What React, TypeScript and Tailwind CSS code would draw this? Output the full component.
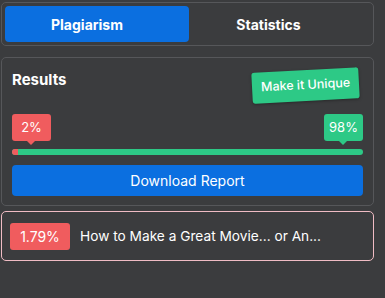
export default function App() {
  return (
    <div className="h-[298px] w-[385px] bg-[#3b3c3e] pt-[2px] pl-[1px] pr-[11px] font-['Inter',sans-serif] text-white">
      {/* tabs */}
      <div className="flex h-[44px] rounded-[5px] border border-[#56575a] p-[3px]">
        <button className="w-[184px] rounded-[4px] bg-[#0b6fe0] pr-[20px] text-[14px] font-bold">Plagiarism</button>
        <button className="flex-1 pr-[22px] text-[14px] font-bold">Statistics</button>
      </div>

      {/* results card */}
      <div className="mt-[11px] h-[149px] rounded-[5px] border border-[#56575a] px-[10px] pt-[10px]">
        <div className="flex items-start justify-between">
          <h2 className="mt-[1px] text-[15px] font-bold">Results</h2>
          <span className="mr-[4px] mt-[2px] -rotate-3 rounded-[3px] bg-[#2dc986] px-[9px] py-[6px] text-[12.5px] font-medium shadow-[0_1px_3px_rgba(0,0,0,0.35)]">
            Make it Unique
          </span>
        </div>

        <div className="mt-[13px] flex justify-between">
          <div className="relative flex h-[27px] w-[39px] items-center justify-center rounded-[3px] bg-[#f05c5e] text-[13px]">
            2%
            <span className="absolute -bottom-[4px] left-[15px] h-0 w-0 border-x-[4px] border-t-[4px] border-x-transparent border-t-[#f05c5e]" />
          </div>
          <div className="relative flex h-[27px] w-[39px] items-center justify-center rounded-[3px] bg-[#2dc986] text-[13px]">
            98%
            <span className="absolute -bottom-[4px] left-[15px] h-0 w-0 border-x-[4px] border-t-[4px] border-x-transparent border-t-[#2dc986]" />
          </div>
        </div>

        <div className="mt-[8px] flex h-[6px] overflow-hidden rounded-full bg-[#2dc986]">
          <div className="w-[6px] bg-[#f05c5e]" />
        </div>

        <button className="mt-[10px] h-[31px] w-full rounded-[4px] bg-[#0b6fe0] text-[14px]">Download Report</button>
      </div>

      {/* source row */}
      <div className="mt-[5px] flex h-[50px] items-center gap-[10px] rounded-[5px] border border-[#f0bcc4] px-[8px]">
        <span className="flex h-[27px] w-[60px] items-center justify-center rounded-[3px] bg-[#f05c5e] text-[14px]">1.79%</span>
        <span className="text-[13.7px]">How to Make a Great Movie... or An...</span>
      </div>
    </div>
  );
}
